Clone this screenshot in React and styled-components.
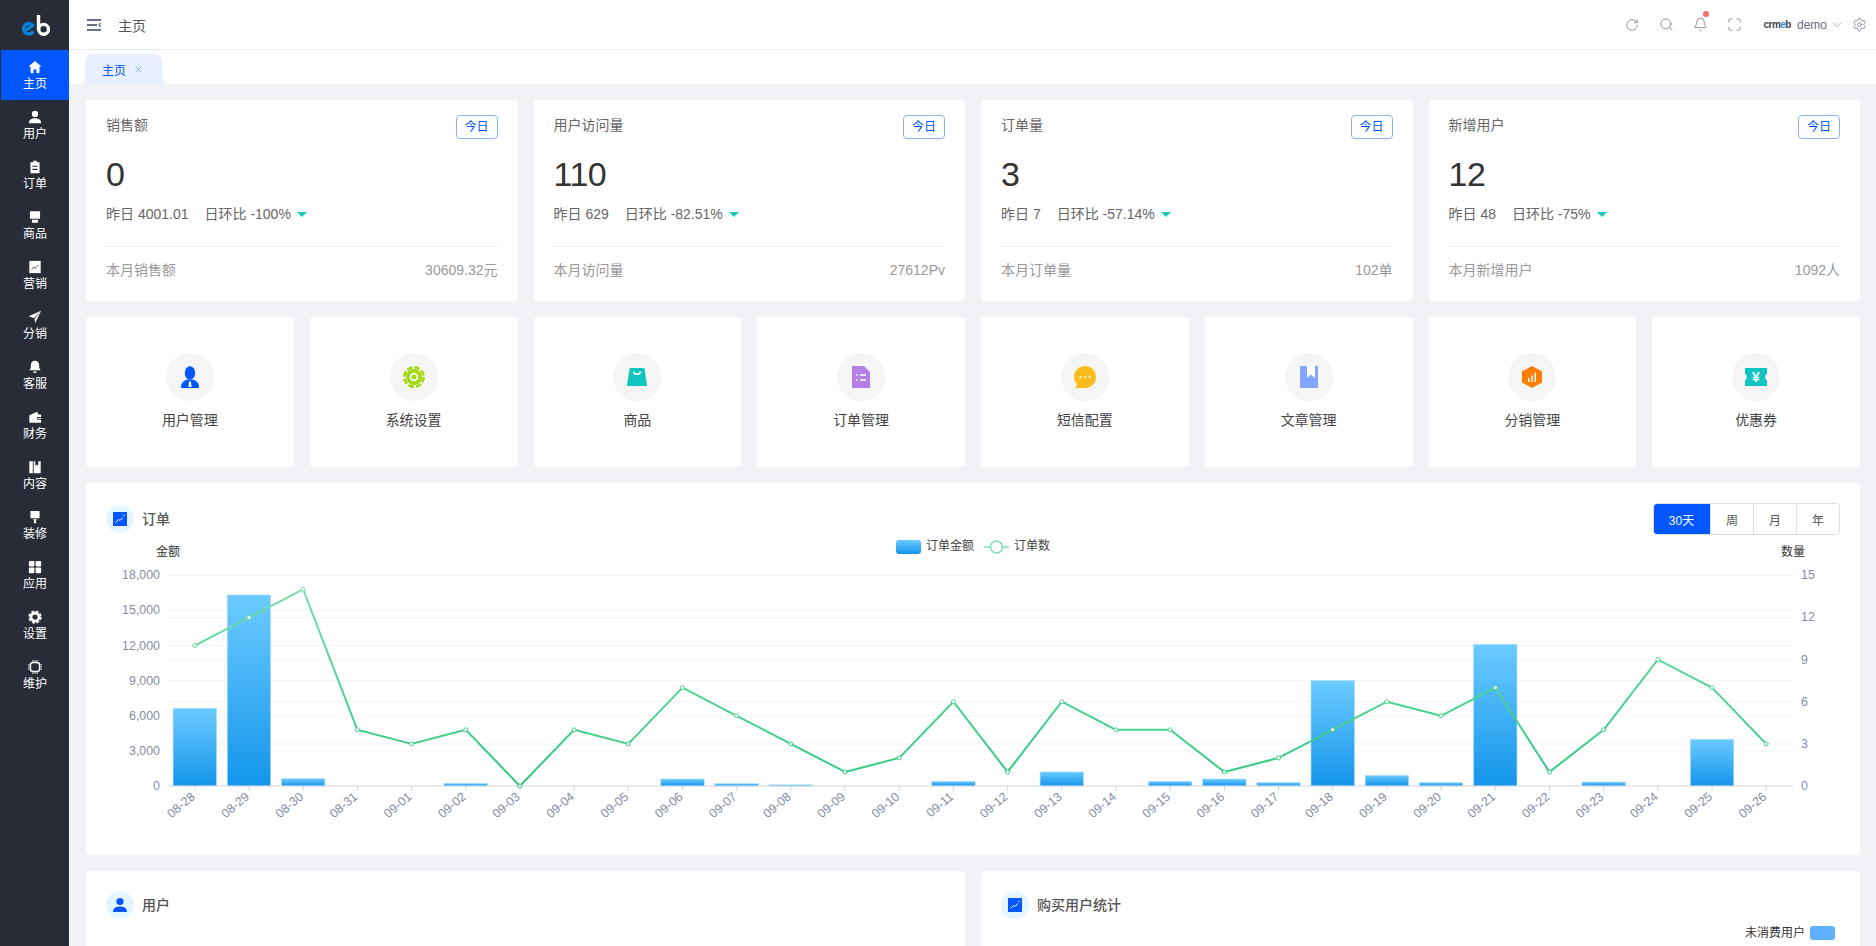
import React from 'react';
import styled, { createGlobalStyle } from 'styled-components';
import { RotateCw, Search, Bell, Maximize, ChevronDown, Settings, X } from 'lucide-react';

const FONT = '"Liberation Sans", "Noto Sans CJK SC", sans-serif';
const BLUE = '#0256ff';

const GlobalStyle = createGlobalStyle`
  html, body {
    margin: 0;
    height: 100%;
    overflow: hidden;
    font-family: ${FONT};
    background: #f0f2f6;
  }
  * { box-sizing: border-box; }
`;

const Layout = styled.div`
  display: flex;
  width: 100%;
  height: 946px;
  overflow: hidden;
`;

const Sidebar = styled.aside`
  flex: 0 0 69px;
  background: #282c36;
  padding-left: 1px;
`;

const Logo = styled.div`
  height: 50px;
  display: flex;
  align-items: center;
  justify-content: center;
  padding-top: 1px;
`;

const NavItem = styled.div`
  height: 50px;
  padding-top: 10px;
  display: flex;
  flex-direction: column;
  align-items: center;
  color: #fff;
  font-size: 12px;
  background: ${(props) => (props.$active ? BLUE : 'transparent')};
`;

const NavLabel = styled.span`
  line-height: 16px;
  margin-top: 2px;
`;

const NavIconBox = styled.span`
  display: block;
  height: 14px;
  width: 14px;
  svg { display: block; width: 14px; height: 14px; }
`;

const Main = styled.div`
  flex: 1;
  min-width: 0;
  display: flex;
  flex-direction: column;
`;

const Header = styled.header`
  height: 50px;
  flex-shrink: 0;
  background: #fff;
  border-bottom: 1px solid #e9ebef;
  display: flex;
  align-items: center;
  padding: 0 9px 0 18px;
`;

const Crumb = styled.span`
  margin-left: 17px;
  font-size: 14px;
  color: #555;
`;

const HeaderRight = styled.div`
  margin-left: auto;
  display: flex;
  align-items: center;
  color: #6a7080;
`;

const HeaderIcon = styled.span`
  position: relative;
  width: 34px;
  display: flex;
  justify-content: center;
`;

const Dot = styled.i`
  position: absolute;
  top: -6px;
  left: 20px;
  width: 6px;
  height: 6px;
  border-radius: 50%;
  background: #f56c6c;
`;

const Brand = styled.span`
  margin-left: 12px;
  font-size: 10px;
  font-weight: 700;
  letter-spacing: -0.5px;
  color: #444;
  b { color: #2d8cf0; }
`;

const UserName = styled.span`
  margin-left: 6px;
  font-size: 12px;
  color: #666e80;
`;

const Chevron = styled.span`
  display: flex;
  margin: 0 8px 0 3px;
`;

const TabBar = styled.div`
  height: 34px;
  flex-shrink: 0;
  background: #fff;
  display: flex;
  align-items: flex-end;
  padding-left: 16px;
`;

const Tab = styled.div`
  position: relative;
  width: 77px;
  height: 30px;
  background: #e8f0fe;
  border-radius: 8px 8px 0 0;
  display: flex;
  align-items: center;
  padding-left: 17px;
  font-size: 12px;
  color: ${BLUE};
  &::before, &::after {
    content: '';
    position: absolute;
    bottom: 0;
    width: 4px;
    height: 6px;
    background: #e8f0fe;
  }
  &::before { left: -3px; clip-path: polygon(100% 0, 100% 100%, 0 100%); }
  &::after { right: -4px; clip-path: polygon(0 0, 100% 100%, 0 100%); }
`;

const TabClose = styled.span`
  display: flex;
  margin-left: 7px;
  color: #5b9bff;
`;

const Content = styled.main`
  flex: 1;
  padding: 16px 16px 0 17px;
  display: flex;
  flex-direction: column;
  gap: 16px;
  overflow: hidden;
`;

const StatRow = styled.section`
  display: grid;
  grid-template-columns: repeat(4, 1fr);
  gap: 16px;
`;

const Card = styled.div`
  background: #fff;
  border-radius: 4px;
`;

const StatCard = styled(Card)`
  height: 201px;
  padding: 15px 20px 0;
`;

const StatHead = styled.div`
  display: flex;
  justify-content: space-between;
  font-size: 14px;
  line-height: 20px;
  color: #666;
`;

const TodayTag = styled.span`
  width: 42px;
  height: 24px;
  border: 1px solid #8fb1f5;
  border-radius: 4px;
  font-size: 12px;
  line-height: 22px;
  text-align: center;
  color: ${BLUE};
`;

const StatValue = styled.div`
  margin-top: 13px;
  font-size: 34px;
  letter-spacing: -0.5px;
  line-height: 44px;
  color: #333;
`;

const StatCompare = styled.div`
  margin-top: 8px;
  display: flex;
  align-items: center;
  font-size: 14px;
  line-height: 20px;
  color: #666;
  span + span { margin-left: 16px; }
`;

const DownArrow = styled.i`
  margin-left: 6px;
  border-left: 5px solid transparent;
  border-right: 5px solid transparent;
  border-top: 5px solid #19c9c0;
`;

const StatFoot = styled.div`
  margin-top: 22px;
  padding-top: 13px;
  border-top: 1px solid #e8eef8;
  display: flex;
  justify-content: space-between;
  font-size: 14px;
  line-height: 20px;
  color: #999;
`;

const ShortcutRow = styled.section`
  display: grid;
  grid-template-columns: repeat(8, 1fr);
  gap: 16px;
`;

const Shortcut = styled(Card)`
  height: 150px;
  padding-top: 36px;
  display: flex;
  flex-direction: column;
  align-items: center;
  font-size: 14px;
  line-height: 20px;
  color: #444;
`;

const ShortcutCircle = styled.div`
  width: 48px;
  height: 48px;
  margin-bottom: 9px;
  border-radius: 50%;
  background: #f5f5f5;
  display: flex;
  align-items: center;
  justify-content: center;
`;

const ChartCard = styled(Card)`
  height: 372px;
  flex-shrink: 0;
`;

const PanelHead = styled.div`
  display: flex;
  align-items: center;
  padding: 20px 20px 0;
`;

const HeadIcon = styled.div`
  width: 28px;
  height: 28px;
  border-radius: 50%;
  background: #e6f5ff;
  display: flex;
  align-items: center;
  justify-content: center;
`;

const PanelTitle = styled.span`
  margin-left: 8px;
  padding-bottom: 2px;
  font-size: 14px;
  font-weight: 500;
  color: #555;
`;

const RangeGroup = styled.div`
  margin-left: auto;
  display: flex;
  height: 32px;
  border: 1px solid #dcdee2;
  border-radius: 4px;
  overflow: hidden;
`;

const RangeButton = styled.span`
  width: ${(props) => (props.$active ? '57px' : '43px')};
  margin: ${(props) => (props.$active ? '-1px 0 -1px -1px' : '0')};
  display: flex;
  align-items: center;
  justify-content: center;
  font-size: 12px;
  color: ${(props) => (props.$active ? '#fff' : '#555')};
  background: ${(props) => (props.$active ? BLUE : '#fff')};
  & + & { border-left: 1px solid #dcdee2; }
`;

const ChartSvg = styled.svg`
  display: block;
  width: 100%;
  height: 320px;
  font-family: ${FONT};
  font-size: 12px;
`;

const BottomRow = styled.section`
  display: grid;
  grid-template-columns: repeat(2, 1fr);
  gap: 16px;
`;

const BottomCard = styled(Card)`
  height: 200px;
`;

const PieLegend = styled.div`
  display: flex;
  justify-content: flex-end;
  align-items: center;
  gap: 5px;
  margin-top: 4px;
  padding-right: 25px;
  font-size: 12px;
  color: #333;
  span { padding-bottom: 3px; }
`;

const Swatch = styled.i`
  width: 25px;
  height: 14px;
  border-radius: 3px;
  background: #5fb0ff;
`;

const HomeIcon = () => (
  <svg viewBox="0 0 16 16" fill="#fff"><path d="M8 1 1.600 6.600c-.5.5-.2 1.200.4 1.200h.9V14c0 .6.4 1 1 1h2.400v-4.200h3.400V15h2.400c.6 0 1-.4 1-1V7.800h.9c.6 0 .9-.7.4-1.200z" /></svg>
);
const UserIcon = () => (
  <svg viewBox="0 0 16 16" fill="#fff"><circle cx="8" cy="4.500" r="3.600" /><path d="M1 15c0-3.800 3-5.500 7-5.500s7 1.700 7 5.500z" /></svg>
);
const ClipIcon = () => (
  <svg viewBox="0 0 16 16" fill="#fff"><path fillRule="evenodd" d="M6 .8h4v1.700h3.200V15.200H2.800V2.500H6zM5 6.500v1.300h6V6.500zM5 10v1.300h6V10z" /></svg>
);
const ShopIcon = () => (
  <svg viewBox="0 0 16 16" fill="#fff"><path d="M3.500 1.500h9c.8 0 1.300.5 1.300 1.300V10H2.200V2.800c0-.8.5-1.300 1.300-1.300zM4.500 11.200h7V14.500h-7z" /></svg>
);
const TrendIcon = () => (
  <svg viewBox="0 0 16 16"><rect x="1.500" y="1" width="13" height="14" fill="#fff" /><path d="M4 11l2.500-3 2 1.500L12 5.500" fill="none" stroke="#555" strokeWidth="1" /></svg>
);
const SendIcon = () => (
  <svg viewBox="0 0 16 16" fill="#fff"><path d="M15 .8.800 7.200l4.700 1.700 1 .4L15 .8 7.500 10l.6 5.200z" /></svg>
);
const BellIcon = () => (
  <svg viewBox="0 0 16 16" fill="#fff"><path d="M8 .8c-3 0-4.800 2.400-4.800 5.200v3L1.500 11.800h13L12.800 9V6C12.800 3.200 11 .8 8 .8zM6 13h4c0 2.400-4 2.400-4 0z" /></svg>
);
const WalletIcon = () => (
  <svg viewBox="0 0 16 16" fill="#fff"><path fillRule="evenodd" d="M1.500 6 10.500 2l1.300 3H15v3h-4.500v3.200H15v3.300H1.500zM11.500 9v1.200H15V9z" /></svg>
);
const BookIcon = () => (
  <svg viewBox="0 0 16 16" fill="#fff"><path d="M1.500 1.500h4V15h-4zM6.500 1.500h1.800v5l1.700-1.300 1.700 1.300v-5h2.800V15h-8z" /></svg>
);
const BrushIcon = () => (
  <svg viewBox="0 0 16 16" fill="#fff"><path d="M2.800 1h10.400v8.500H2.800zM5.500 10.500h5L9.200 12v3.200H6.800V12z" /></svg>
);
const GridIcon = () => (
  <svg viewBox="0 0 16 16" fill="#fff"><rect x="1" y="1" width="6.300" height="6.300" rx="1" /><rect x="8.700" y="1" width="6.300" height="6.300" rx="1" /><rect x="1" y="8.700" width="6.300" height="6.300" rx="1" /><rect x="8.700" y="8.700" width="6.300" height="6.300" rx="1" /></svg>
);
const GearIcon = () => (
  <svg viewBox="0 0 16 16" fill="none" stroke="#fff">
    <circle cx="8" cy="8" r="4.500" strokeWidth="3" />
    <circle cx="8" cy="8" r="6.400" strokeWidth="2.400" strokeDasharray="3.200 1.830" />
  </svg>
);
const ChipIcon = () => (
  <svg viewBox="0 0 16 16" fill="none" stroke="#fff">
    <rect x="2.800" y="2.800" width="10.400" height="10.400" rx="3" strokeWidth="1.600" />
    <path d="M5.500 0v2M8 0v2M10.500 0v2M5.500 14v2M8 14v2M10.500 14v2M0 5.500h2M0 8h2M0 10.500h2M14 5.500h2M14 8h2M14 10.500h2" strokeWidth="1" />
  </svg>
);

const navItems = [
  ['主页', HomeIcon],
  ['用户', UserIcon],
  ['订单', ClipIcon],
  ['商品', ShopIcon],
  ['营销', TrendIcon],
  ['分销', SendIcon],
  ['客服', BellIcon],
  ['财务', WalletIcon],
  ['内容', BookIcon],
  ['装修', BrushIcon],
  ['应用', GridIcon],
  ['设置', GearIcon],
  ['维护', ChipIcon],
];

const stats = [
  { title: '销售额', value: '0', yesterday: '昨日 4001.01', ratio: '日环比 -100%', footLabel: '本月销售额', foot: '30609.32元' },
  { title: '用户访问量', value: '110', yesterday: '昨日 629', ratio: '日环比 -82.51%', footLabel: '本月访问量', foot: '27612Pv' },
  { title: '订单量', value: '3', yesterday: '昨日 7', ratio: '日环比 -57.14%', footLabel: '本月订单量', foot: '102单' },
  { title: '新增用户', value: '12', yesterday: '昨日 48', ratio: '日环比 -75%', footLabel: '本月新增用户', foot: '1092人' },
];

const shortcutIcons = {
  user: (
    <svg width="24" height="24" viewBox="0 0 24 24">
      <ellipse cx="12" cy="8" rx="5.200" ry="6.800" fill={BLUE} />
      <path d="M4 23c-.6 0-1-.4-1-1 0-4 2.500-6.500 6.500-7.500h5c4 1 6.500 3.500 6.500 7.500 0 .6-.4 1-1 1z" fill={BLUE} />
      <path d="M11 16.500h2l.5 5.500h-3z" fill="#fff" />
    </svg>
  ),
  gear: (
    <svg width="24" height="24" viewBox="0 0 24 24">
      <circle cx="12" cy="12" r="8" fill="#a2d90f" />
      <circle cx="12" cy="12" r="9.700" fill="none" stroke="#a2d90f" strokeWidth="2.600" strokeDasharray="5.600 2.020" />
      <circle cx="12" cy="12" r="3.400" fill="none" stroke="#fff" strokeWidth="1.800" />
    </svg>
  ),
  bag: (
    <svg width="24" height="24" viewBox="0 0 24 24">
      <path d="M5.500 3h13c.6 0 1 .4 1 1L22 20c0 .6-.4 1-1 1H3c-.6 0-1-.4-1-1L4.500 4c0-.6.4-1 1-1z" fill="#10c5c0" />
      <path d="M8.500 6.500c.8 3.800 6.200 3.800 7 0" fill="none" stroke="#fff" strokeWidth="1.500" />
    </svg>
  ),
  doc: (
    <svg width="24" height="24" viewBox="0 0 24 24">
      <path d="M4 1h11l6 6v15c0 .6-.4 1-1 1H4c-.6 0-1-.4-1-1V2c0-.6.4-1 1-1z" fill="#b57fe8" />
      <path d="M7 10h1.500M11 10h6M7 15h1.500M11 15h6" stroke="#fff" strokeWidth="1.300" />
    </svg>
  ),
  chat: (
    <svg width="24" height="24" viewBox="0 0 24 24">
      <path d="M12 1c6.100 0 11 4.900 11 11s-4.900 11-11 11H2.500l1.500-4C2 17 1 14.500 1 12 1 5.900 5.900 1 12 1z" fill="#fbbc1d" />
      <circle cx="7.500" cy="12" r="1.100" fill="#fff" />
      <circle cx="12" cy="12" r="1.100" fill="#fff" />
      <circle cx="16.500" cy="12" r="1.100" fill="#fff" />
    </svg>
  ),
  book: (
    <svg width="24" height="24" viewBox="0 0 24 24">
      <rect x="3" y="1" width="18" height="22" rx="1" fill="#84a6ff" />
      <path d="M10 1h8v12l-4-3.500L10 13z" fill="#fff" />
    </svg>
  ),
  hex: (
    <svg width="24" height="24" viewBox="0 0 24 24">
      <path d="M12 1 22 6.500v11L12 23 2 17.500v-11z" fill="#ff7d00" />
      <path d="M8 13h1.500v4H8zM11.200 10.500h1.600V17h-1.600zM14.500 7.500h1.500V17h-1.500z" fill="#fff" />
    </svg>
  ),
  ticket: (
    <svg width="24" height="24" viewBox="0 0 24 24">
      <path d="M1 3h22v6c-2.500 0-2.500 6 0 6v6H1v-6c2.500 0 2.500-6 0-6z" fill="#10c5c0" />
      <text x="12" y="17" textAnchor="middle" fontSize="14" fontWeight="700" fontFamily={FONT} fill="#fff">¥</text>
    </svg>
  ),
};

const shortcuts = [
  ['用户管理', 'user'],
  ['系统设置', 'gear'],
  ['商品', 'bag'],
  ['订单管理', 'doc'],
  ['短信配置', 'chat'],
  ['文章管理', 'book'],
  ['分销管理', 'hex'],
  ['优惠券', 'ticket'],
];

// chart is drawn in page coordinates, the viewBox starts where the svg sits
const days = ['08-28', '08-29', '08-30', '08-31'];
for (let i = 1; i <= 26; i += 1) days.push(`09-${String(i).padStart(2, '0')}`);
const amounts = [6640, 16320, 630, 0, 0, 230, 0, 0, 0, 600, 200, 100, 0, 0, 400, 0, 1200, 0, 400, 600, 300, 9000, 900, 300, 12100, 0, 340, 0, 3990, 0];
const counts = [10, 12, 14, 4, 3, 4, 0, 4, 3, 7, 5, 3, 1, 2, 6, 1, 6, 4, 4, 1, 2, 4, 6, 5, 7, 1, 4, 9, 7, 3];

const X0 = 167.7;
const X1 = 1793.3;
const Y0 = 786;
const PLOT = 210.7;
const STEP = (X1 - X0) / 30;
const cx = (i) => X0 + STEP * (i + 0.5);
const yCount = (v) => Y0 - (v / 15) * PLOT;
const yAmount = (v) => Y0 - (v / 18000) * PLOT;

const leftTicks = [0, 3000, 6000, 9000, 12000, 15000, 18000];
const rightTicks = [0, 3, 6, 9, 12, 15];

const OrderChart = () => (
  <ChartSvg viewBox="86 535 1774 320">
    <defs>
      <linearGradient id="barFill" x1="0" y1="0" x2="0" y2="1">
        <stop offset="0" stopColor="#6bcbff" />
        <stop offset="1" stopColor="#1495eb" />
      </linearGradient>
      <linearGradient id="lineStroke" gradientUnits="userSpaceOnUse" x1="0" y1="575" x2="0" y2="786">
        <stop offset="0" stopColor="#7be0ae" />
        <stop offset="1" stopColor="#2ec97f" />
      </linearGradient>
    </defs>

    <text x="168" y="556" textAnchor="middle" fill="#333">金额</text>
    <text x="1793" y="556" textAnchor="middle" fill="#333">数量</text>

    <rect x="896" y="540" width="25" height="14" rx="3" fill="url(#barFill)" />
    <text x="926" y="550" fill="#444">订单金额</text>
    <path d="M984 547h25" stroke="#7be0ae" strokeWidth="1.500" />
    <circle cx="996.500" cy="547" r="6" fill="#fff" stroke="#7be0ae" strokeWidth="1.500" />
    <text x="1014" y="550" fill="#444">订单数</text>

    {leftTicks.map((t) => (
      <g key={t}>
        {t > 0 && <path d={`M${X0} ${yAmount(t)}H${X1}`} stroke="#f3f4f7" />}
        <text x="160" y={yAmount(t) + 4} textAnchor="end" fill="#858da0" fontSize="12.400">{t.toLocaleString('en-US')}</text>
      </g>
    ))}
    {rightTicks.map((t) => (
      <g key={t}>
        {t > 0 && <path d={`M${X0} ${yCount(t)}H${X1}`} stroke="#f3f4f7" />}
        <text x="1801" y={yCount(t) + 4} fill="#858da0" fontSize="12.400">{t}</text>
      </g>
    ))}

    {amounts.map((v, i) => v > 0 && (
      <rect key={days[i]} x={cx(i) - 21.700} y={yAmount(v)} width="43.400" height={Y0 - yAmount(v)} fill="url(#barFill)" stroke="#a6dcff" strokeWidth="0.600" />
    ))}

    <path d={`M${X0} ${Y0}H${X1}`} stroke="#cfd5e2" />
    {days.map((d, i) => (
      <g key={d}>
        <path d={`M${cx(i)} ${Y0}v5`} stroke="#cfd5e2" />
        <text transform={`translate(${cx(i) + 1} 798) rotate(-40)`} textAnchor="end" fill="#858da0" fontSize="12.400">{d}</text>
      </g>
    ))}

    <polyline points={counts.map((v, i) => `${cx(i)},${yCount(v)}`).join(' ')} fill="none" stroke="url(#lineStroke)" strokeWidth="2" strokeLinejoin="round" />
    {counts.map((v, i) => (
      <circle key={days[i]} cx={cx(i)} cy={yCount(v)} r="2" fill="#fff" stroke="url(#lineStroke)" />
    ))}
  </ChartSvg>
);

const TrendBadge = () => (
  <HeadIcon>
    <svg width="14" height="14" viewBox="0 0 14 14">
      <rect width="14" height="14" fill={BLUE} />
      <path d="M2.500 10.500 5.500 7.500l1.500 1L9.800 5.500" fill="none" stroke="#fff" strokeWidth="1" />
      <circle cx="11" cy="3.500" r="0.700" fill="#fff" />
    </svg>
  </HeadIcon>
);

export default function App() {
  return (
    <>
      <GlobalStyle />
      <Layout>
        <Sidebar>
          <Logo>
            <svg width="29" height="21" viewBox="0 0 29 21" fill="none" strokeWidth="3.400">
              <path d="M3.300 16.300 11.800 10.300A5.300 5.300 0 1 0 12.300 16.500" stroke="#0a80d8" />
              <path d="M17.500 0V14.500" stroke="#fff" />
              <circle cx="22.600" cy="14.300" r="4.900" stroke="#fff" />
            </svg>
          </Logo>
          {navItems.map(([label, Icon], i) => (
            <NavItem key={label} $active={i === 0}>
              <NavIconBox><Icon /></NavIconBox>
              <NavLabel>{label}</NavLabel>
            </NavItem>
          ))}
        </Sidebar>

        <Main>
          <Header>
            <svg width="14" height="12" viewBox="0 0 14 12" fill="none" stroke="#6a7080" strokeWidth="2">
              <path d="M0 1h14M0 6h10M0 11h14" />
              <path d="M14 3.800 11.800 6 14 8.200" strokeWidth="1.200" />
            </svg>
            <Crumb>主页</Crumb>
            <HeaderRight>
              <HeaderIcon><RotateCw size={14} strokeWidth={1.200} /></HeaderIcon>
              <HeaderIcon><Search size={15} strokeWidth={1.200} /></HeaderIcon>
              <HeaderIcon><Bell size={15} strokeWidth={1.200} /><Dot /></HeaderIcon>
              <HeaderIcon><Maximize size={15} strokeWidth={1.200} /></HeaderIcon>
              <Brand>crm<b>e</b>b</Brand>
              <UserName>demo</UserName>
              <Chevron><ChevronDown size={14} strokeWidth={1} /></Chevron>
              <Settings size={15} strokeWidth={1.200} />
            </HeaderRight>
          </Header>

          <TabBar>
            <Tab>
              主页
              <TabClose><X size={11} strokeWidth={1.500} /></TabClose>
            </Tab>
          </TabBar>

          <Content>
            <StatRow>
              {stats.map((s) => (
                <StatCard key={s.title}>
                  <StatHead>
                    {s.title}
                    <TodayTag>今日</TodayTag>
                  </StatHead>
                  <StatValue>{s.value}</StatValue>
                  <StatCompare>
                    <span>{s.yesterday}</span>
                    <span>{s.ratio}</span>
                    <DownArrow />
                  </StatCompare>
                  <StatFoot>
                    <span>{s.footLabel}</span>
                    <span>{s.foot}</span>
                  </StatFoot>
                </StatCard>
              ))}
            </StatRow>

            <ShortcutRow>
              {shortcuts.map(([label, icon]) => (
                <Shortcut key={label}>
                  <ShortcutCircle>{shortcutIcons[icon]}</ShortcutCircle>
                  {label}
                </Shortcut>
              ))}
            </ShortcutRow>

            <ChartCard>
              <PanelHead>
                <TrendBadge />
                <PanelTitle>订单</PanelTitle>
                <RangeGroup>
                  <RangeButton $active>30天</RangeButton>
                  <RangeButton>周</RangeButton>
                  <RangeButton>月</RangeButton>
                  <RangeButton>年</RangeButton>
                </RangeGroup>
              </PanelHead>
              <OrderChart />
            </ChartCard>

            <BottomRow>
              <BottomCard>
                <PanelHead>
                  <HeadIcon>
                    <svg width="16" height="16" viewBox="0 0 16 16" fill={BLUE}>
                      <circle cx="8" cy="4.500" r="3.600" />
                      <path d="M1 15c0-3.800 3-5.500 7-5.500s7 1.700 7 5.500z" />
                    </svg>
                  </HeadIcon>
                  <PanelTitle>用户</PanelTitle>
                </PanelHead>
              </BottomCard>
              <BottomCard>
                <PanelHead>
                  <TrendBadge />
                  <PanelTitle>购买用户统计</PanelTitle>
                </PanelHead>
                <PieLegend>
                  <span>未消费用户</span>
                  <Swatch />
                </PieLegend>
              </BottomCard>
            </BottomRow>
          </Content>
        </Main>
      </Layout>
    </>
  );
}
